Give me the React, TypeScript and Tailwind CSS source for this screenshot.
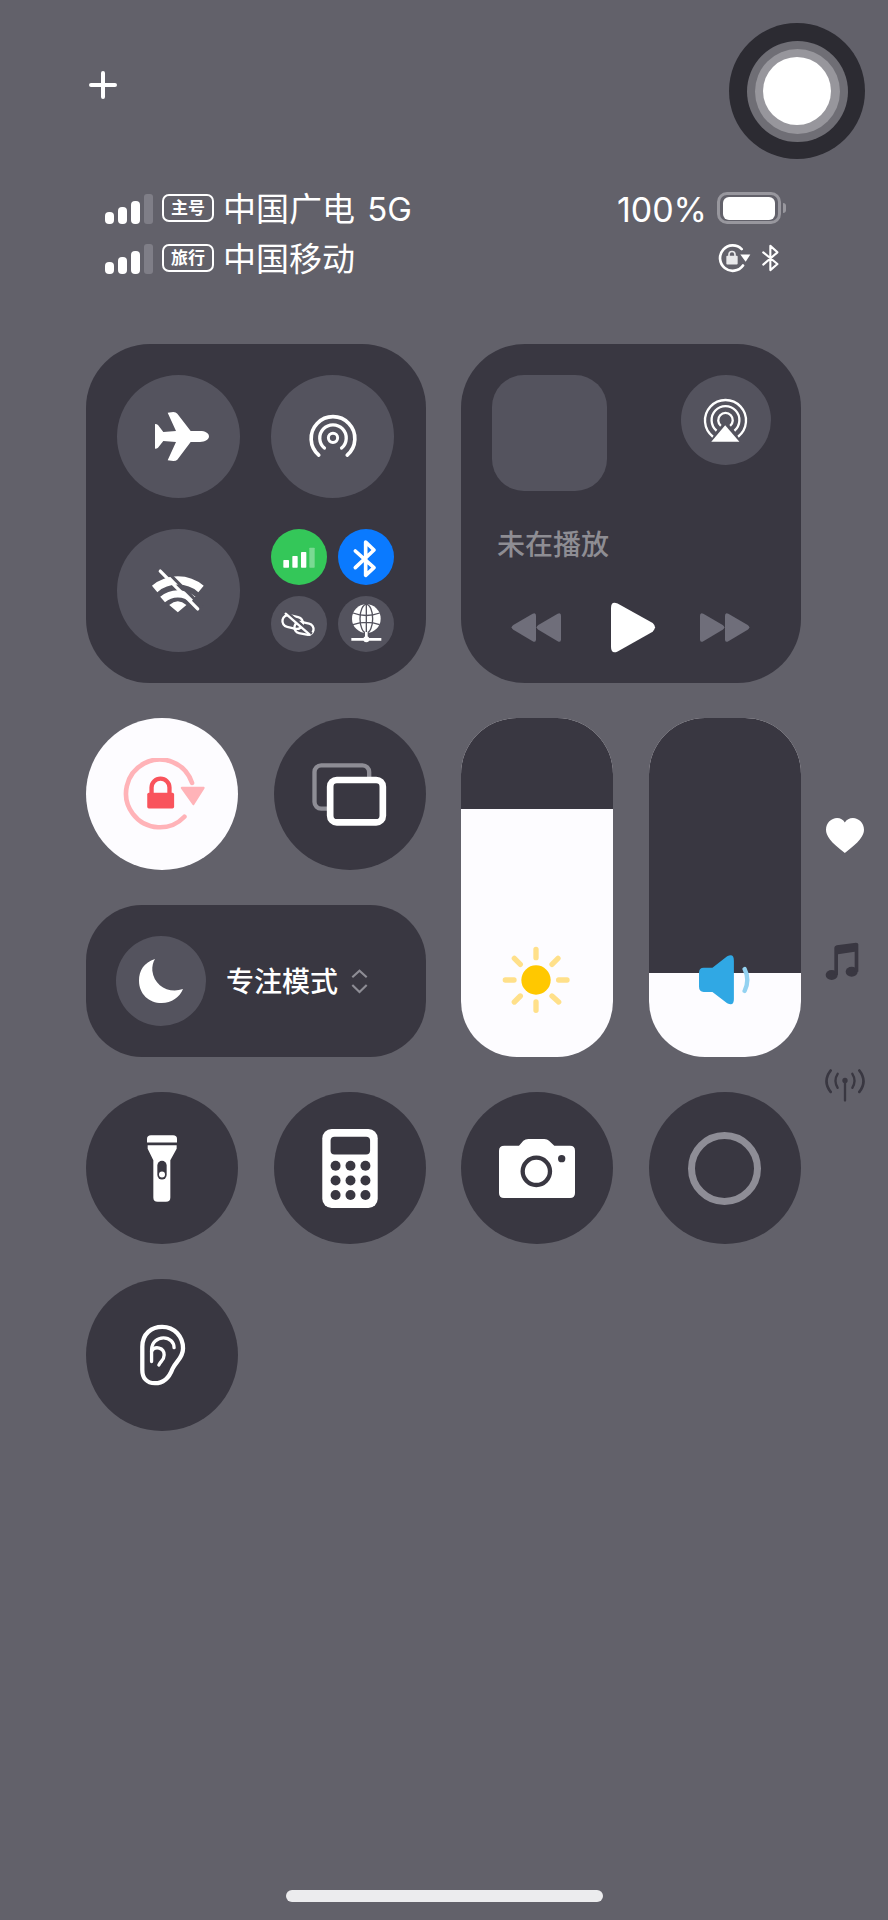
import React from "react";

const PANEL = "bg-[#393741]";
const CIRCLE = "bg-[#54535e]";

function Ic({ vb, w, h, children, className = "" }: { vb: string; w: number; h: number; children: React.ReactNode; className?: string }) {
  return (
    <svg viewBox={vb} width={w} height={h} className={"block shrink-0 " + className} fill="none">
      {children}
    </svg>
  );
}

function Signal() {
  return (
    <div className="mt-[2px] flex items-end gap-[4px] h-[30px] w-[48px]">
      <div className="w-[9px] h-[12px] rounded-[4px] bg-white" />
      <div className="w-[9px] h-[17px] rounded-[4px] bg-white" />
      <div className="w-[9px] h-[23px] rounded-[4px] bg-white" />
      <div className="w-[9px] h-[30px] rounded-[3px] bg-[#7f7e87]" />
    </div>
  );
}

function Badge({ children }: { children: React.ReactNode }) {
  return (
    <div className="ml-[9px] flex h-[28px] w-[52px] items-center justify-center rounded-[7px] border-2 border-white text-[17px] font-bold leading-none text-white">
      {children}
    </div>
  );
}

function Round({ className = "", children }: { className?: string; children?: React.ReactNode }) {
  return <div className={"flex items-center justify-center rounded-full " + className}>{children}</div>;
}

function ConnectivityPanel() {
  return (
    <div className={"col-span-2 row-span-2 rounded-[64px] p-[31px] " + PANEL}>
      <div className="grid grid-cols-[123px_123px] gap-[31px]">
        <Round className={"h-[123px] w-[123px] " + CIRCLE}>
          <Ic vb="255 245 162 147" w={54} h={49} className="ml-[7px]">
            <path d="M417 318C417 308 405 302 390 302L362 302L322 250Q318 245 310 245L293 247L318 302L280 305L264 284Q261 281 255 281L255 355Q261 355 264 352L280 332L318 335L293 390L310 392Q318 392 322 388L362 335L390 335C405 335 417 328 417 318Z" fill="#fff" />
          </Ic>
        </Round>
        <Round className={"h-[123px] w-[123px] " + CIRCLE}>
          <Ic vb="710 248 156 145" w={52} h={48}>
            <circle cx="788" cy="323" r="14" stroke="#fff" strokeWidth="9" />
            <path d="M762 354A40 40 0 1 1 814 354" stroke="#fff" strokeWidth="10" strokeLinecap="round" />
            <path d="M745 375A66 66 0 1 1 831 375" stroke="#fff" strokeWidth="11" strokeLinecap="round" />
          </Ic>
        </Round>
        <Round className={"h-[123px] w-[123px] " + CIRCLE}>
          <Ic vb="245 715 160 135" w={53} h={45} className="mr-[2px]">
            <path d="M256 778A108 108 0 0 1 396 778" stroke="#fff" strokeWidth="25" />
            <path d="M280 810A70 70 0 0 1 372 810" stroke="#fff" strokeWidth="22" />
            <path d="M326 848L300 826Q326 804 352 826Z" fill="#fff" />
            <path d="M284 716L400 832" stroke="#54535e" strokeWidth="9" />
            <path d="M273 724L386 838" stroke="#fff" strokeWidth="10" strokeLinecap="round" />
          </Ic>
        </Round>
        <div className="grid grid-cols-[56px_56px] gap-[11px]">
          <Round className="h-[56px] w-[56px] bg-[#34c759]">
            <Ic vb="18 9 168 168" w={56} h={56}>
              <rect x="55" y="102" width="17" height="23" rx="2" fill="#fff" />
              <rect x="82" y="90" width="16" height="35" rx="2" fill="#fff" />
              <rect x="108" y="78" width="16" height="47" rx="2" fill="#fff" />
              <rect x="133" y="65" width="16" height="60" rx="2" fill="#fff" opacity=".35" />
            </Ic>
          </Round>
          <Round className="h-[56px] w-[56px] bg-[#0a7aff]">
            <Ic vb="220 9 168 168" w={56} h={56}>
              <path d="M272 75L328 125L303 148L303 48L328 72L272 125" stroke="#fff" strokeWidth="11" strokeLinecap="round" strokeLinejoin="round" />
            </Ic>
          </Round>
          <Round className={"h-[56px] w-[56px] " + CIRCLE}>
            <Ic vb="18 212 168 168" w={56} h={56}>
              <rect x="52" y="272" width="62" height="36" rx="18" transform="rotate(12 83 290)" stroke="#fff" strokeWidth="7" />
              <rect x="88" y="292" width="58" height="34" rx="17" transform="rotate(12 117 309)" stroke="#fff" strokeWidth="7" />
              <path d="M68 263L140 326" stroke="#54535e" strokeWidth="9" />
              <path d="M62 265L134 328" stroke="#fff" strokeWidth="7" strokeLinecap="round" />
            </Ic>
          </Round>
          <Round className={"h-[56px] w-[56px] " + CIRCLE}>
            <Ic vb="220 212 168 168" w={56} h={56}>
              <circle cx="305" cy="280" r="43" fill="#fff" />
              <ellipse cx="305" cy="280" rx="19" ry="43" stroke="#54535e" strokeWidth="4" />
              <path d="M305 237V323M265 263Q305 278 345 263M265 298Q305 284 345 298" stroke="#54535e" strokeWidth="4" />
              <path d="M305 320V342M260 342H350" stroke="#fff" strokeWidth="8" />
              <circle cx="305" cy="342" r="9" fill="#fff" />
            </Ic>
          </Round>
        </div>
      </div>
    </div>
  );
}

function MediaPanel() {
  return (
    <div className={"col-span-2 row-span-2 flex flex-col rounded-[64px] pl-[31px] pr-[30px] pt-[31px] " + PANEL}>
      <div className="flex items-start justify-between">
        <div className={"h-[116px] w-[115px] rounded-[32px] " + CIRCLE} />
        <Round className={"h-[90px] w-[90px] " + CIRCLE}>
          <Ic vb="752 198 142 142" w={47} h={47}>
            <path d="M785 318A62 62 0 1 1 861 318" stroke="#fff" strokeWidth="7" />
            <path d="M796 300A42 42 0 1 1 850 300" stroke="#fff" strokeWidth="7" />
            <path d="M809 285A22 22 0 1 1 837 285" stroke="#fff" strokeWidth="7" />
            <path d="M822 283L865 333H780Z" fill="#fff" />
          </Ic>
        </Round>
      </div>
      <div className="ml-[5px] mt-[34px] text-[28px] font-medium leading-[40px] text-[#8e8d93]">未在播放</div>
      <div className="mt-[37px] flex items-center">
        <Ic vb="185 848 150 87" w={50} h={29} className="ml-[19px]">
          <path d="M260 856V927Q260 938 250 933L192 898Q182 891 192 884L250 850Q260 845 260 856Z" fill="#6f6e7a" />
          <path d="M335 856V927Q335 938 325 933L267 898Q257 891 267 884L325 850Q335 845 335 856Z" fill="#6f6e7a" />
        </Ic>
        <Ic vb="482 817 136 153" w={45} h={51} className="ml-[50px]">
          <path d="M482 835Q482 812 502 821L608 880Q622 893 608 906L502 966Q482 975 482 952Z" fill="#fff" />
        </Ic>
        <Ic vb="750 848 150 87" w={50} h={29} className="ml-[44px]">
          <path d="M750 856V927Q750 938 760 933L818 898Q828 891 818 884L760 850Q750 845 750 856Z" fill="#6f6e7a" />
          <path d="M825 856V927Q825 938 835 933L893 898Q903 891 893 884L835 850Q825 845 825 856Z" fill="#6f6e7a" />
        </Ic>
      </div>
    </div>
  );
}

function Slider({ empty, children }: { empty: string; children: React.ReactNode }) {
  return (
    <div className="relative row-span-2">
      <div className="flex h-full flex-col overflow-hidden rounded-[56px] bg-[#fdfcff]">
        <div className={"shrink-0 " + PANEL + " " + empty} />
      </div>
      {children}
    </div>
  );
}

export default function App() {
  return (
    <div lang="zh-CN" className="relative h-[1920px] w-[888px] overflow-hidden bg-[#62616a] text-white [font-family:Inter,'Noto_Sans_CJK_SC',sans-serif]">
      <div className="flex items-center justify-between pl-[89px] pr-[23px] pt-[23px]">
        <Ic vb="0 0 28 28" w={28} h={28} className="mb-[12px]">
          <path d="M14 2V26M2 14H26" stroke="#fff" strokeWidth="4" strokeLinecap="round" />
        </Ic>
        <Round className="h-[136px] w-[136px] bg-[#2c2b32]">
          <Round className="h-[101px] w-[101px] bg-[#6f6e75]">
            <Round className="h-[85px] w-[85px] bg-[#97969c]">
              <div className="h-[68px] w-[68px] rounded-full bg-white" />
            </Round>
          </Round>
        </Round>
      </div>

      <div className="mt-[24px] pl-[105px] pr-[102px]">
        <div className="flex h-[50px] items-center justify-between">
          <div className="flex items-center">
            <Signal />
            <Badge>主号</Badge>
            <span className="ml-[9px] whitespace-pre pt-[2px] text-[33px] leading-none">中国广电<span className="ml-[3px]"> 5G</span></span>
          </div>
          <div className="flex items-center">
            <span className="pt-[3px] text-[34px] leading-none">100%</span>
            <div className="ml-[10px] flex h-[32px] w-[64px] items-center justify-center rounded-[10px] border-[3px] border-[#98979e]">
              <div className="h-[23px] w-[52px] rounded-[6px] bg-white" />
            </div>
            <div className="ml-[2px] h-[10px] w-[3px] rounded-r-[3px] bg-[#98979e]" />
          </div>
        </div>
        <div className="flex h-[50px] items-center justify-between">
          <div className="flex items-center">
            <Signal />
            <Badge>旅行</Badge>
            <span className="ml-[9px] pt-[2px] text-[33px] leading-none">中国移动</span>
          </div>
          <div className="mr-[5px] flex items-center gap-[8px]">
            <Ic vb="50 175 105 95" w={35} h={32}>
              <path d="M128 245A38 38 0 1 1 124 196" stroke="#fff" strokeWidth="8" strokeLinecap="round" />
              <path d="M120 212H150L136 234Z" fill="#fff" />
              <rect x="78" y="216" width="34" height="26" rx="3" fill="#e8e8ea" />
              <path d="M86 218V212A9 9 0 0 1 104 212V218" stroke="#e8e8ea" strokeWidth="5" />
            </Ic>
            <Ic vb="180 180 65 85" w={21} h={28}>
              <path d="M190 205L234 241L212 260V185L234 205L190 243" stroke="#fff" strokeWidth="6.5" strokeLinejoin="round" strokeLinecap="round" />
            </Ic>
          </div>
        </div>
      </div>

      <div className="ml-[86px] mt-[61px] flex items-start">
        <div className="grid grid-cols-[repeat(4,152px)] auto-rows-[152px] gap-x-[35.5px] gap-y-[35.1px]">
          <ConnectivityPanel />
          <MediaPanel />

          <Round className="h-[152px] w-[152px] bg-[#fdfcff]">
            <Ic vb="160 175 250 220" w={83} h={73} className="ml-[5px]">
              <path d="M345 352A102 102 0 1 1 368 250" stroke="#ffb3b8" strokeWidth="14" strokeLinecap="round" />
              <path d="M337 265H403L372 314Z" fill="#ffb3b8" stroke="#ffb3b8" strokeWidth="6" strokeLinejoin="round" />
              <rect x="233" y="280" width="81" height="47" rx="5" fill="#f9535c" />
              <path d="M246 282V264A27 27 0 0 1 300 264V282" stroke="#f9535c" strokeWidth="13" />
            </Ic>
          </Round>
          <Round className={"h-[152px] w-[152px] " + PANEL}>
            <Ic vb="728 184 230 195" w={77} h={65}>
              <rect x="738" y="194" width="164" height="130" rx="20" stroke="#8e8d95" strokeWidth="13" />
              <rect x="785" y="238" width="158" height="127" rx="20" fill="#393741" stroke="#fff" strokeWidth="20" />
            </Ic>
          </Round>
          <Slider empty="h-[91px]">
            <div className="absolute left-[41px] top-[228px]">
              <Ic vb="160 740 204 204" w={68} h={68}>
                <g stroke="#ffe08a" strokeWidth="16" strokeLinecap="round">
                  <path d="M262 750V775M262 908V933M170 842H196M330 842H355M197 777L215 795M310 890L330 908M328 777L310 795M215 890L197 908" />
                </g>
                <circle cx="262" cy="842" r="44" fill="#ffc800" />
              </Ic>
            </div>
          </Slider>
          <Slider empty="h-[255px]">
            <div className="absolute left-[50px] top-[237px]">
              <Ic vb="748 768 155 149" w={52} h={50}>
                <path d="M748 820Q748 806 762 806H788L832 772Q852 762 852 785V900Q852 922 832 912L788 878H762Q748 878 748 862Z" fill="#30a8e4" />
                <path d="M884 810Q900 842 884 875" stroke="#93d2f1" strokeWidth="13" strokeLinecap="round" />
              </Ic>
            </div>
          </Slider>

          <div className={"col-span-2 flex items-center rounded-[56px] pl-[30px] " + PANEL}>
            <Round className={"h-[90px] w-[90px] " + CIRCLE}>
              <Ic vb="210 780 132 132" w={44} h={44}>
                <path d="M258 780C225 790 210 815 210 845C210 885 240 912 278 912C308 912 332 895 342 870C300 885 255 860 250 815C249 802 252 790 258 780Z" fill="#fff" />
              </Ic>
            </Round>
            <span className="ml-[20px] pt-[2px] text-[28px] font-medium leading-none">专注模式</span>
            <Ic vb="842 808 52 74" w={17} h={25} className="ml-[13px]">
              <path d="M846 832L868 812L890 832M846 856L868 877L890 856" stroke="#8e8d95" strokeWidth="6.5" />
            </Ic>
          </div>

          <Round className={"h-[152px] w-[152px] " + PANEL}>
            <Ic vb="233 165 90 200" w={30} h={67}>
              <path d="M233 176Q233 165 245 165H311Q323 165 323 176V187H233Z" fill="#fff" />
              <path d="M235 195H322V206L303 240V352Q303 365 290 365H265Q252 365 252 352V240L235 206Z" fill="#fff" />
              <rect x="264" y="242" width="28" height="56" rx="14" fill="#393741" />
              <circle cx="278" cy="283" r="9" fill="#fff" />
            </Ic>
          </Round>
          <Round className={"h-[152px] w-[152px] " + PANEL}>
            <Ic vb="753 147 167 238" w={56} h={79}>
              <rect x="753" y="147" width="167" height="238" rx="28" fill="#fff" />
              <rect x="778" y="170" width="119" height="54" rx="12" fill="#393741" />
              <g fill="#393741">
                <circle cx="793" cy="258" r="15" /><circle cx="838" cy="258" r="15" /><circle cx="883" cy="258" r="15" />
                <circle cx="793" cy="302" r="15" /><circle cx="838" cy="302" r="15" /><circle cx="883" cy="302" r="15" />
                <circle cx="793" cy="346" r="15" /><circle cx="838" cy="346" r="15" /><circle cx="883" cy="346" r="15" />
              </g>
            </Ic>
          </Round>
          <Round className={"h-[152px] w-[152px] " + PANEL}>
            <Ic vb="152 172 228 180" w={76} h={60}>
              <path d="M168 195H212L225 180Q231 175 240 175H288Q297 175 302 180L318 195H365Q380 195 380 210V337Q380 352 365 352H167Q152 352 152 337V210Q152 195 168 195Z" fill="#fff" />
              <circle cx="264" cy="272" r="41" stroke="#393741" strokeWidth="13" />
              <circle cx="340" cy="234" r="11" fill="#393741" />
            </Ic>
          </Round>
          <Round className={"h-[152px] w-[152px] " + PANEL}>
            <div className="h-[73px] w-[73px] rounded-full border-[7px] border-[#8e8d96]" />
          </Round>

          <Round className={"h-[152px] w-[152px] " + PANEL}>
            <Ic vb="212 737 142 186" w={47} h={62}>
              <path d="M222 875V805C222 765 250 745 282 745C320 745 345 775 345 810C345 838 325 848 313 872C304 896 290 915 260 915C236 915 222 900 222 875Z" stroke="#fff" strokeWidth="13" />
              <path d="M250 850V815C250 792 268 778 286 778C305 778 318 792 318 808" stroke="#fff" strokeWidth="10" strokeLinecap="round" />
              <path d="M250 818C260 802 288 806 288 830C288 845 278 848 272 860" stroke="#fff" strokeWidth="10" strokeLinecap="round" />
            </Ic>
          </Round>
        </div>

        <div className="ml-[24.5px] flex w-[40px] flex-col items-center pt-[474px]">
          <Ic vb="1127 353 113 104" w={38} h={35}>
            <path d="M1183 457C1140 425 1127 405 1127 388C1127 368 1143 353 1160 353C1170 353 1178 358 1183 366C1188 358 1197 353 1207 353C1224 353 1240 368 1240 388C1240 405 1226 425 1183 457Z" fill="#fff" />
          </Ic>
          <Ic vb="1125 723 102 120" w={34} h={40} className="mr-[6px] mt-[89px]">
            <ellipse cx="1145" cy="822" rx="18" ry="15" fill="#393741" />
            <ellipse cx="1205" cy="812" rx="18" ry="15" fill="#393741" />
            <path d="M1153 820V740Q1153 735 1160 733L1218 725Q1225 725 1225 730V812H1214V752L1164 760V822Z" fill="#393741" />
          </Ic>
          <Ic vb="1120 1103 126 104" w={42} h={35} className="mt-[86px]">
            <circle cx="1183" cy="1140" r="8" fill="#393741" />
            <path d="M1183 1140V1200" stroke="#393741" strokeWidth="7" strokeLinecap="round" />
            <path d="M1161 1120Q1148 1140 1161 1162M1205 1120Q1218 1140 1205 1162" stroke="#393741" strokeWidth="7" strokeLinecap="round" />
            <path d="M1140 1110Q1115 1142 1140 1174M1226 1110Q1251 1142 1226 1174" stroke="#393741" strokeWidth="8" strokeLinecap="round" />
          </Ic>
        </div>
      </div>

      <div className="ml-[286px] mt-[458.5px] h-[12px] w-[317px] rounded-full bg-[#ececee]" />
    </div>
  );
}
